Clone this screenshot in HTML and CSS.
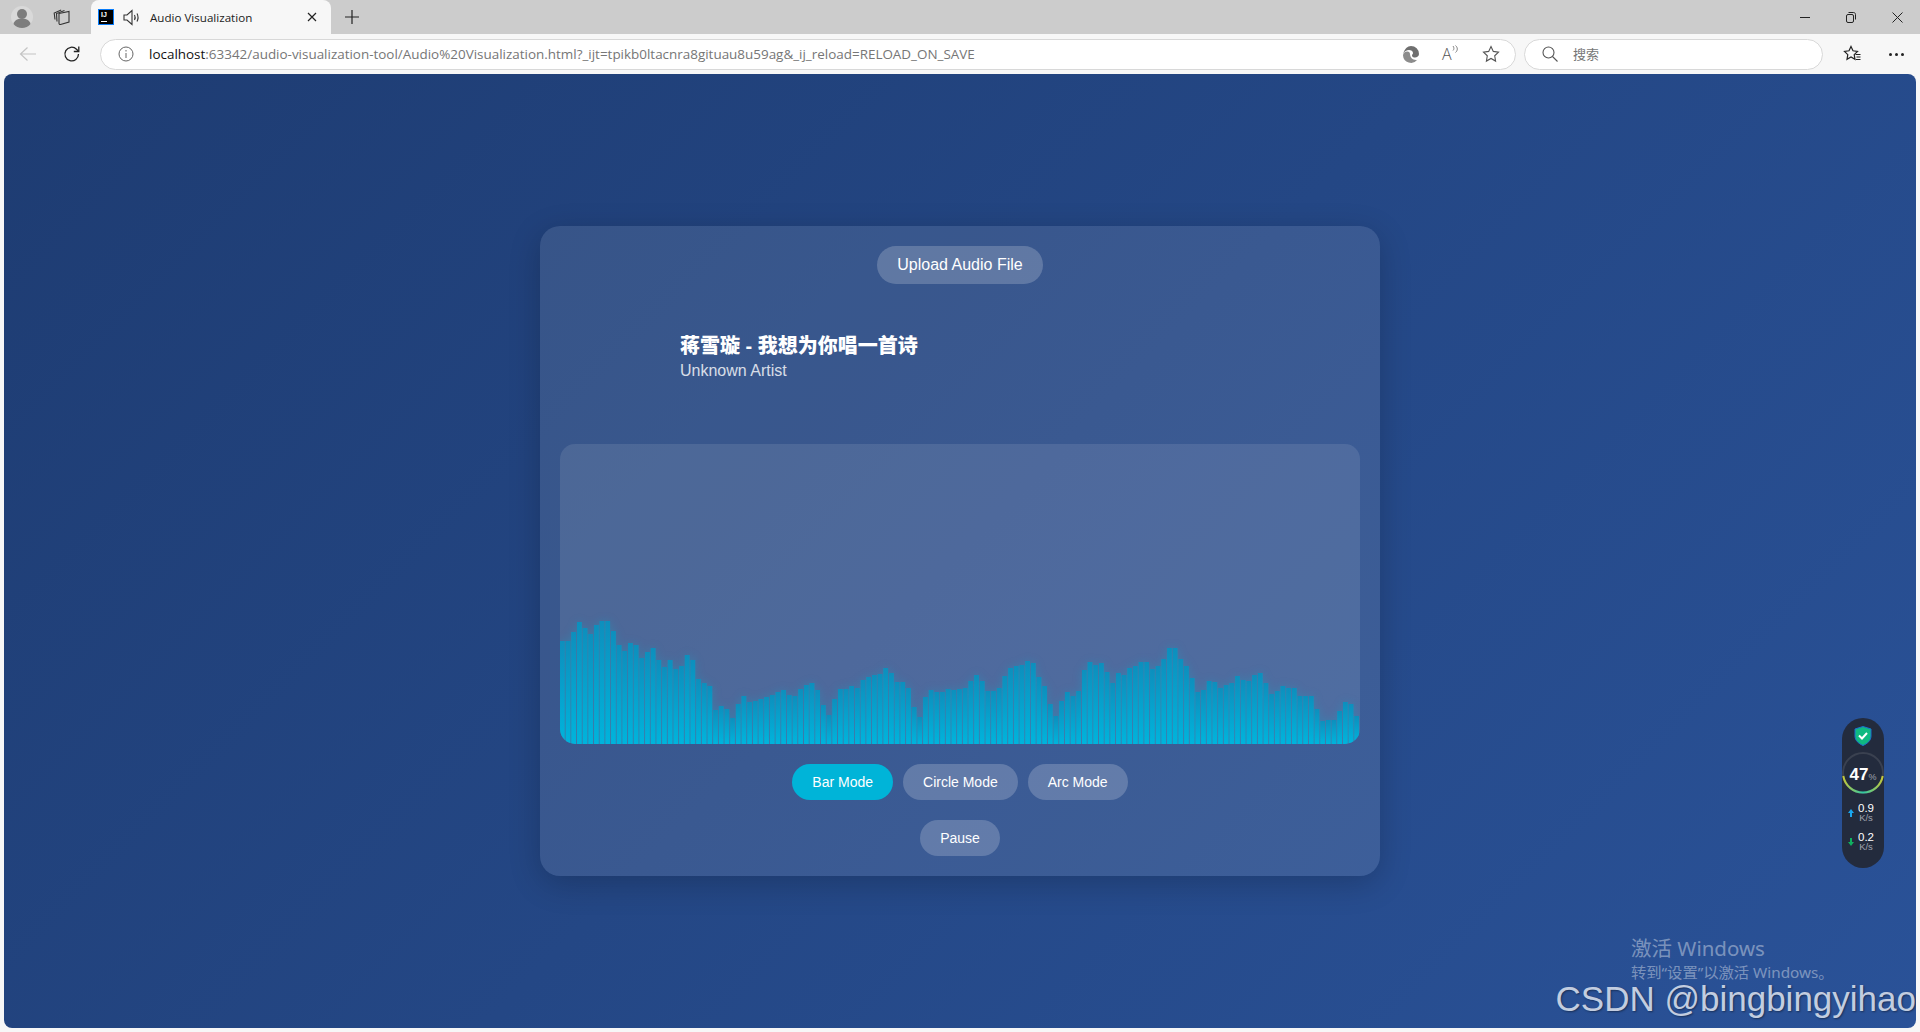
FILE: index.html
```html
<!DOCTYPE html>
<html lang="en">
<head>
  <meta charset="UTF-8" />
  <title>Audio Visualization</title>
  <link rel="stylesheet" href="styles.css">
</head>
<body>

  <div class="tab-strip">
    <div class="strip-btn">
      <svg width="24" height="24" viewBox="0 0 24 24"><circle cx="12" cy="12" r="11" fill="#d9d9d9"/><circle cx="12" cy="9" r="5" fill="#7d7d7d"/><path d="M3.5 19c1-4 4.500-5.500 8.500-5.500s7.500 1.500 8.500 5.500c-2 2.600-5 4-8.500 4s-6.500-1.400-8.500-4z" fill="#7d7d7d"/></svg>
    </div>
    <div class="strip-btn">
      <svg width="18" height="18" viewBox="0 0 18 18" fill="none" stroke="#333" stroke-width="1.100"><path d="M6 5.500l10-2v10.500l-8.500 2.500c-.8.200-1.500-.300-1.500-1.200z"/><path d="M4 13.500l-.5-8 8-3"/><path d="M2 11.500l-.8-6.500 7-3"/></svg>
    </div>
    <div class="tab">
      <div class="ij-icon"><span class="ij-text">IJ</span><span class="ij-line"></span></div>
      <svg class="tab-sound" width="17" height="17" viewBox="0 0 17 17" fill="none" stroke="#333" stroke-width="1.100"><path d="M1 6h3l5-4.500v14l-5-4.500h-3z"/><path d="M11.500 6c.8 1.500.8 3.500 0 5"/><path d="M14 4.500c1.300 2.500 1.300 5.500 0 8"/></svg>
      <span class="tab-title">Audio Visualization</span>
      <svg class="tab-close" width="10" height="10" viewBox="0 0 10 10" stroke="#222" stroke-width="1.200"><path d="M1 1l8 8M9 1l-8 8"/></svg>
    </div>
    <div class="new-tab">
      <svg width="14" height="14" viewBox="0 0 14 14" stroke="#222" stroke-width="1.200"><path d="M7 0v14M0 7h14"/></svg>
    </div>
    <div class="window-controls">
      <svg width="10" height="10" viewBox="0 0 10 10" stroke="#222"><path d="M0 5.500h10"/></svg>
      <svg width="10" height="11" viewBox="0 0 10 11" fill="none" stroke="#222"><rect x=".5" y="2.500" width="7" height="8" rx="1.500"/><path d="M2.500 .5h5c1.200 0 2 .8 2 2v5"/></svg>
      <svg width="11" height="11" viewBox="0 0 11 11" stroke="#222"><path d="M.5 .5l10 10M10.500 .5l-10 10"/></svg>
    </div>
  </div>

  <div class="toolbar">
    <div class="tool-btn">
      <svg width="18" height="16" viewBox="0 0 18 16" fill="none" stroke="#c4c4c4" stroke-width="1.200"><path d="M17 8h-15M8.500 1.500l-7 6.500 7 6.500"/></svg>
    </div>
    <div class="tool-btn">
      <svg width="18" height="18" viewBox="0 0 18 18" fill="none" stroke="#222" stroke-width="1.300"><path d="M15.500 9a6.800 6.800 0 1 1-2-4.800l2 2"/><path d="M15.800 1.500v5h-5"/></svg>
    </div>
    <div class="address-bar">
      <svg class="info-icon" width="16" height="16" viewBox="0 0 16 16" fill="none" stroke="#666"><circle cx="8" cy="8" r="7"/><path d="M8 7v5M8 4v1.500"/></svg>
      <span class="url"><span class="url-host">localhost</span>:63342/audio-visualization-tool/Audio%20Visualization.html?_ijt=tpikb0ltacnra8gituau8u59ag&amp;_ij_reload=RELOAD_ON_SAVE</span>
      <div class="address-icons">
        <svg width="18" height="18" viewBox="0 0 18 18"><path d="M9 1a8 8 0 0 1 8 8c0 2.200-2 3.500-4 3.500-1.500 0-3-.6-3-2 0-1 1-1.500 1-2.500 0-2-2-3-4-3-2.500 0-4.500 1.500-5.800 3.500C2.500 4 5.500 1 9 1z" fill="#6f6f6f"/><path d="M1 10.500c0-2.500 2-4 4.500-4 1.500 0 2.500 1 2.500 2.500 0 3 2.500 6 6 6 .5 0 1 0 1.300-.2A8 8 0 0 1 1 10.500z" fill="#8c8c8c"/></svg>
        <span class="read-aloud">A<svg width="7" height="10" viewBox="0 0 7 10" fill="none" stroke="#666" stroke-width=".8"><path d="M1 5.500c1.200-1.200 1.200-3 0-4.500M3.500 7.500c2.400-2 2.400-5 0-7"/></svg></span>
        <svg width="18" height="18" viewBox="0 0 18 18" fill="none" stroke="#555" stroke-width="1.100"><path d="M9 1.500l2.300 4.900 5.200.7-3.800 3.700.9 5.300-4.600-2.600-4.600 2.600.9-5.300-3.800-3.700 5.200-.7z"/></svg>
      </div>
    </div>
    <div class="search-bar">
      <svg width="16" height="16" viewBox="0 0 16 16" fill="none" stroke="#555" stroke-width="1.100"><circle cx="6.500" cy="6.500" r="5.500"/><path d="M10.500 10.500l5 5"/></svg>
      <span class="search-text">搜索</span>
    </div>
    <div class="tool-end">
      <svg width="18" height="18" viewBox="0 0 18 18" fill="none" stroke="#222" stroke-width="1.200"><path d="M8 1.500l2 4.300 4.500.6-3.300 3.200.8 4.700-4-2.300-4 2.300.8-4.700L1.500 6.400 6 5.800z"/><path d="M12.500 9.500h5M13.500 12h4M13 14.500h4.500"/></svg>
    </div>
    <div class="tool-end more">
      <span class="dot"></span><span class="dot"></span><span class="dot"></span>
    </div>
  </div>

  <div class="page">
    <div class="player">
      <button class="pill upload-btn">Upload Audio File</button>
      <div class="track-row">
        <div class="cover"></div>
        <div class="track-info">
          <div class="track-title">蒋雪璇 - 我想为你唱一首诗</div>
          <div class="track-artist">Unknown Artist</div>
        </div>
      </div>
      <canvas id="viz" class="viz" width="800" height="300"></canvas>
      <div class="button-row">
        <button class="pill small active">Bar Mode</button>
        <button class="pill small">Circle Mode</button>
        <button class="pill small">Arc Mode</button>
      </div>
      <div class="button-row">
        <button class="pill small">Pause</button>
      </div>
    </div>

    <div class="net-widget">
      <svg class="shield" width="18" height="20" viewBox="0 0 18 20"><path d="M9 .5l8 2.500v7c0 4.500-3.500 7.500-8 9.500-4.500-2-8-5-8-9.500v-7z" fill="#10b981" stroke="#1d6fd0"/><path d="M5 9.500l3 3 5-5.500" fill="none" stroke="#fff" stroke-width="2"/></svg>
      <div class="gauge">
        <svg class="gauge-ring" width="44" height="44" viewBox="0 0 44 44" fill="none" stroke-width="2"><circle cx="22" cy="22" r="20" stroke="#3a4150"/><path d="M2.300 25a20 20 0 0 0 39.400 0" stroke="url(#ring)"/><defs><linearGradient id="ring" x1="0" x2="1" y1="0" y2="0"><stop offset="0" stop-color="#c4c83a"/><stop offset=".5" stop-color="#2fc7a5"/><stop offset="1" stop-color="#c4c83a"/></linearGradient></defs></svg>
        <span class="gauge-num">47</span><span class="gauge-pct">%</span>
      </div>
      <div class="speed">
        <svg width="6" height="8" viewBox="0 0 6 8" fill="#1aa7f0"><path d="M3 0l3 4h-2v4h-2v-4h-2z"/></svg>
        <div class="speed-text"><span class="speed-val">0.9</span><span class="speed-unit">K/s</span></div>
      </div>
      <div class="speed">
        <svg width="6" height="8" viewBox="0 0 6 8" fill="#10b060"><path d="M3 8l3-4h-2v-4h-2v4h-2z"/></svg>
        <div class="speed-text"><span class="speed-val">0.2</span><span class="speed-unit">K/s</span></div>
      </div>
    </div>

    <div class="activate">
      <div class="activate-big">激活 Windows</div>
      <div class="activate-small">转到“设置”以激活 Windows。</div>
    </div>
    <div class="csdn">CSDN @bingbingyihao</div>
  </div>

  <script src="script.js"></script>
</body>
</html>
```

FILE: styles.css
```css
html, body {
  margin: 0;
  padding: 0;
  height: 100%;
  overflow: hidden;
}

body {
  display: flex;
  flex-direction: column;
  background: #f7f7f7;
  font-family: "Open Sans", "Noto Sans CJK SC", sans-serif;
}

/* browser chrome */
.tab-strip {
  display: flex;
  align-items: center;
  height: 34px;
  padding-left: 2px;
  background: #cccccc;
  flex-shrink: 0;
}

.strip-btn {
  display: flex;
  align-items: center;
  justify-content: center;
  width: 40px;
  height: 34px;
}

.tab {
  display: flex;
  align-items: center;
  width: 240px;
  height: 34px;
  margin-left: 9px;
  padding-left: 7px;
  box-sizing: border-box;
  background: #f7f7f7;
  border-radius: 8px 8px 0 0;
}

.ij-icon {
  position: relative;
  width: 16px;
  height: 16px;
  box-sizing: border-box;
  background: #000;
  border: 1px solid #087cfa;
}

.ij-text {
  display: block;
  font: bold 7px/8px "Liberation Sans", sans-serif;
  color: #fff;
  padding: 1px 0 0 2px;
}

.ij-line {
  position: absolute;
  left: 2px;
  bottom: 2px;
  width: 6px;
  height: 1px;
  background: #fff;
}

.tab-sound {
  margin-left: 9px;
}

.tab-title {
  margin-left: 10px;
  font-size: 11.600px;
  color: #222;
  width: 157px;
  white-space: nowrap;
}

.new-tab {
  display: flex;
  margin-left: 14px;
}

.window-controls {
  display: flex;
  align-items: center;
  gap: 36px;
  margin-left: auto;
  margin-right: 17px;
}

.toolbar {
  display: flex;
  align-items: center;
  height: 40px;
  padding-left: 6px;
  flex-shrink: 0;
  background: #f7f7f7;
}

.tool-btn {
  display: flex;
  align-items: center;
  justify-content: center;
  width: 44px;
}

.address-bar, .search-bar {
  display: flex;
  align-items: center;
  height: 31px;
  box-sizing: border-box;
  background: #fff;
  border: 1px solid #d8d8d8;
  border-radius: 16px;
}

.address-bar {
  width: 1416px;
  margin-left: 6px;
  padding-left: 17px;
}

.info-icon {
  flex-shrink: 0;
}

.url {
  margin-left: 15px;
  font-size: 13.440px;
  color: #767676;
  white-space: nowrap;
}

.url-host {
  color: #111;
}

.address-icons {
  display: flex;
  align-items: center;
  gap: 22px;
  margin-left: auto;
  margin-right: 15px;
}

.read-aloud {
  display: flex;
  width: 18px;
  font: 16px/18px "Open Sans", sans-serif;
  font-weight: 300;
  color: #555;
}

.search-bar {
  width: 299px;
  margin-left: 8px;
  padding-left: 17px;
}

.search-text {
  margin-left: 15px;
  margin-top: -2px;
  font-size: 13px;
  color: #767676;
}

.tool-end {
  display: flex;
  justify-content: center;
  align-items: center;
  width: 44px;
  margin-left: 7px;
}

.more {
  gap: 3px;
  margin-left: 0;
}

.dot {
  width: 3px;
  height: 3px;
  border-radius: 50%;
  background: #222;
}

/* page */
.page {
  position: relative;
  flex: 1;
  display: flex;
  align-items: center;
  justify-content: center;
  margin: 0 4px 4px 4px;
  overflow: hidden;
  border-radius: 8px;
  background: linear-gradient(135deg, #1e3c72, #2a5298);
  font-family: "Liberation Sans", "Noto Sans CJK SC", sans-serif;
  color: #fff;
}

.player {
  display: flex;
  flex-direction: column;
  align-items: center;
  width: 840px;
  padding: 20px;
  box-sizing: border-box;
  background: rgba(255, 255, 255, 0.1);
  border-radius: 20px;
  box-shadow: 0 8px 32px rgba(0, 0, 0, 0.2);
}

.pill {
  border: none;
  border-radius: 25px;
  background: rgba(255, 255, 255, 0.2);
  color: #fff;
  font-family: inherit;
  cursor: pointer;
}

.upload-btn {
  height: 38px;
  padding: 0 20px;
  font-size: 16px;
}

.small {
  height: 36px;
  padding: 0 20px;
  font-size: 14px;
}

.small.active {
  background: #00b4d8;
}

.track-row {
  display: flex;
  align-items: center;
  align-self: stretch;
  gap: 20px;
  margin: 23px 0 37px 0;
}

.cover {
  width: 100px;
  height: 100px;
}

.track-title {
  font-size: 20px;
  font-weight: 900;
  line-height: 24px;
}

.track-artist {
  margin-top: 3px;
  font-size: 16px;
  line-height: 20px;
  opacity: 0.8;
}

.viz {
  display: block;
  width: 800px;
  height: 300px;
  background: rgba(255, 255, 255, 0.1);
  border-radius: 15px;
}

.button-row {
  display: flex;
  gap: 10px;
  margin-top: 20px;
}

/* floating bits over the page */
.net-widget {
  position: absolute;
  left: 1838px;
  top: 644px;
  width: 42px;
  height: 150px;
  display: flex;
  flex-direction: column;
  align-items: center;
  background: #232b3d;
  border-radius: 21px;
}

.shield {
  margin-top: 8px;
}

.gauge {
  position: relative;
  display: flex;
  align-items: baseline;
  justify-content: center;
  width: 44px;
  height: 44px;
  margin-top: 5px;
  line-height: 47px;
  flex-shrink: 0;
}

.gauge-ring {
  position: absolute;
  left: 0;
  top: 0;
}

.gauge-num {
  font-size: 17px;
  font-weight: bold;
}

.gauge-pct {
  font-size: 9px;
  color: #a0a4ad;
}

.speed {
  display: flex;
  align-items: center;
  align-self: flex-start;
  gap: 4px;
  margin-top: 8px;
  margin-left: 6px;
}

.speed + .speed {
  margin-top: 9px;
}

.speed-text {
  display: flex;
  flex-direction: column;
  align-items: center;
}

.speed-val {
  font-size: 11.500px;
  line-height: 10px;
}

.speed-unit {
  font-size: 9.500px;
  line-height: 10px;
  color: #a0a4ad;
}

.activate {
  position: absolute;
  left: 1627px;
  top: 861px;
  color: rgba(255, 255, 255, 0.4);
  font-family: "Noto Sans", "Noto Sans CJK SC", sans-serif;
  white-space: nowrap;
}

.activate-big {
  font-size: 20.500px;
  line-height: 26px;
}

.activate-small {
  font-size: 15.300px;
  line-height: 22px;
}

.csdn {
  position: absolute;
  right: 0;
  top: 905px;
  font-size: 35px;
  line-height: 40px;
  color: #c2cde0;
  text-shadow: 1px 1px 2px rgba(0, 0, 0, 0.4);
  white-space: nowrap;
}
```

FILE: script.js
```js
const heights = [
  103, 103, 112, 122, 116, 110, 119, 123, 123, 113, 99, 93, 101, 99, 86, 92, 96, 84, 77, 84,
  75, 78, 89, 84, 65, 61, 58, 34, 38, 35, 26, 40, 48, 42, 43, 45, 47, 49, 52, 54,
  49, 48, 55, 59, 61, 54, 39, 29, 45, 55, 55, 58, 56, 64, 67, 69, 70, 76, 71, 62,
  62, 56, 37, 27, 47, 54, 52, 52, 55, 54, 55, 56, 63, 69, 63, 53, 53, 56, 68, 76,
  78, 79, 83, 81, 67, 58, 40, 28, 43, 52, 48, 53, 74, 82, 79, 81, 72, 61, 71, 69,
  76, 78, 82, 82, 75, 78, 85, 96, 96, 85, 78, 66, 52, 54, 63, 62, 56, 59, 61, 68,
  64, 63, 69, 71, 61, 50, 53, 58, 56, 56, 48, 48, 48, 35, 23, 24, 24, 33, 42, 40, 28
];

const canvas = document.getElementById('viz');
const ctx = canvas.getContext('2d');
const barWidth = canvas.width / heights.length;

// glow first, so it stays behind every bar
ctx.shadowColor = 'rgba(0, 180, 216, 0.7)';
ctx.shadowBlur = 10;
ctx.fillStyle = 'rgba(0, 180, 216, 0.4)';
ctx.beginPath();
heights.forEach((h, i) => {
  ctx.rect(i * barWidth, canvas.height - h, barWidth - 1, h);
});
ctx.fill();

ctx.shadowColor = 'transparent';
heights.forEach((h, i) => {
  const top = canvas.height - h;
  const grad = ctx.createLinearGradient(0, top, 0, canvas.height);
  grad.addColorStop(0, '#0d8fbd');
  grad.addColorStop(1, '#00b4dc');
  ctx.fillStyle = grad;
  ctx.fillRect(i * barWidth, top, barWidth - 1, h);
});
```
